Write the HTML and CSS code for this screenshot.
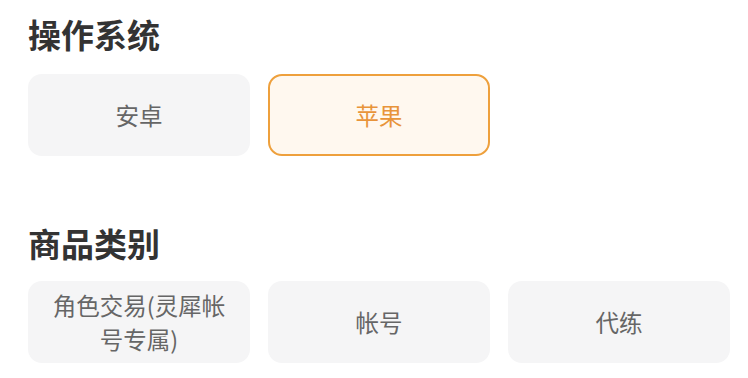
FILE: index.html
```html
<!DOCTYPE html>
<html lang="zh-CN">
<head>
<meta charset="utf-8">
<link rel="stylesheet" href="styles.css">
</head>
<body>
<div class="page">
  <section class="section">
    <h2 class="title">操作系统</h2>
    <div class="options">
      <div class="option">安卓</div>
      <div class="option selected">苹果</div>
    </div>
  </section>
  <section class="section second">
    <h2 class="title">商品类别</h2>
    <div class="options">
      <div class="option">角色交易(灵犀帐号专属)</div>
      <div class="option">帐号</div>
      <div class="option">代练</div>
    </div>
  </section>
</div>
</body>
</html>
```

FILE: styles.css
```css
html, body {
  margin: 0;
  padding: 0;
  background: #ffffff;
}
body {
  font-family: "Noto Sans CJK SC", "Noto Sans", sans-serif;
}
.page {
  padding: 14px 18px 0 28px;
}
.title {
  margin: 0 0 20px 0;
  font-size: 33px;
  line-height: 40px;
  font-weight: 700;
  color: #333333;
}
.second {
  margin-top: 67px;
}
.second .title {
  margin-bottom: 18px;
}
.options {
  display: grid;
  grid-template-columns: repeat(3, 222px);
  column-gap: 18px;
}
.option {
  box-sizing: border-box;
  height: 82px;
  border-radius: 14px;
  background: #f5f5f6;
  color: #666666;
  font-size: 23.5px;
  line-height: 34px;
  display: flex;
  align-items: center;
  justify-content: center;
  text-align: center;
  padding: 0 14px;
}
.option.selected {
  background: #fff8ef;
  border: 2px solid #eea03c;
  color: #e8943a;
}
```
